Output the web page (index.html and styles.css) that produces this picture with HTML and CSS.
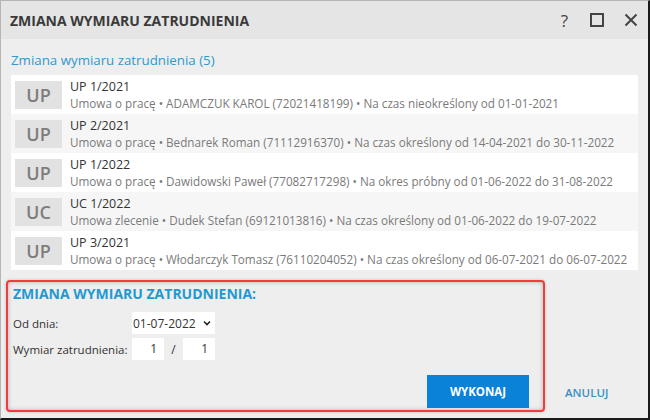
FILE: index.html
```html
<!DOCTYPE html>
<html lang="pl">
<head>
    <meta charset="UTF-8">
    <title>Zmiana wymiaru zatrudnienia</title>
    <link rel="stylesheet" href="styles.css">
</head>
<body>
    <div class="dialog">
        <div class="titlebar">
            <h1>ZMIANA WYMIARU ZATRUDNIENIA</h1>
            <div class="tools">
                <span class="help">?</span>
                <svg width="14" height="14" viewBox="0 0 14 14"><rect x="1" y="1" width="12" height="12" fill="none" stroke="#444" stroke-width="2"/></svg>
                <svg width="14" height="14" viewBox="0 0 14 14"><path d="M1.5 1.5 L12.5 12.5 M12.5 1.5 L1.5 12.5" stroke="#444" stroke-width="2"/></svg>
            </div>
        </div>

        <div class="content">
            <div class="list-title">Zmiana wymiaru zatrudnienia (5)</div>
            <div class="list">
                <div class="row">
                    <div class="badge">UP</div>
                    <div class="info">
                        <div class="name">UP 1/2021</div>
                        <div class="desc">Umowa o pracę • ADAMCZUK KAROL (72021418199) • Na czas nieokreślony od 01-01-2021</div>
                    </div>
                </div>
                <div class="row">
                    <div class="badge">UP</div>
                    <div class="info">
                        <div class="name">UP 2/2021</div>
                        <div class="desc">Umowa o pracę • Bednarek Roman (71112916370) • Na czas określony od 14-04-2021 do 30-11-2022</div>
                    </div>
                </div>
                <div class="row">
                    <div class="badge">UP</div>
                    <div class="info">
                        <div class="name">UP 1/2022</div>
                        <div class="desc">Umowa o pracę • Dawidowski Paweł (77082717298) • Na okres próbny od 01-06-2022 do 31-08-2022</div>
                    </div>
                </div>
                <div class="row">
                    <div class="badge">UC</div>
                    <div class="info">
                        <div class="name">UC 1/2022</div>
                        <div class="desc">Umowa zlecenie • Dudek Stefan (69121013816) • Na czas określony od 01-06-2022 do 19-07-2022</div>
                    </div>
                </div>
                <div class="row">
                    <div class="badge">UP</div>
                    <div class="info">
                        <div class="name">UP 3/2021</div>
                        <div class="desc">Umowa o pracę • Włodarczyk Tomasz (76110204052) • Na czas określony od 06-07-2021 do 06-07-2022</div>
                    </div>
                </div>
            </div>

            <div class="bottom">
                <div class="form-box">
                    <h2>ZMIANA WYMIARU ZATRUDNIENIA:</h2>
                    <div class="form-grid">
                        <label>Od dnia:</label>
                        <div class="select">01-07-2022
                            <svg width="8" height="6" viewBox="0 0 8 6"><path d="M1 1.5 L4 4.5 L7 1.5" fill="none" stroke="#222" stroke-width="1.6"/></svg>
                        </div>
                        <label>Wymiar zatrudnienia:</label>
                        <div class="fraction">
                            <span class="num">1</span>
                            <span class="slash">/</span>
                            <span class="num">1</span>
                        </div>
                    </div>
                    <button class="btn-primary">WYKONAJ</button>
                </div>
                <button class="btn-link">ANULUJ</button>
            </div>
        </div>
    </div>
</body>
</html>
```

FILE: styles.css
```css
html, body {
    margin: 0;
    padding: 0;
}
body {
    font-family: "Open Sans", "Noto Sans", sans-serif;
    color: #333;
}
.dialog {
    width: 650px;
    height: 420px;
    box-sizing: border-box;
    background: #eeeeee;
    border-top: 1px solid #b5b5b5;
    border-left: 1px solid #b5b5b5;
    border-right: 2px solid #1a1a1a;
    border-bottom: 2px solid #1a1a1a;
    display: flex;
    flex-direction: column;
}
.titlebar {
    height: 38px;
    background: #e5e5e5;
    display: flex;
    align-items: center;
    justify-content: space-between;
    padding: 0 10px 0 9px;
}
.titlebar h1 {
    margin: 0;
    font-size: 14px;
    font-weight: 700;
    color: #3a3a3a;
}
.tools {
    display: flex;
    align-items: center;
    gap: 20px;
}
.help {
    font-size: 17px;
    color: #444;
    margin-right: 2px;
}
.content {
    flex: 1;
    padding: 12px 9px 0 10px;
    display: flex;
    flex-direction: column;
}
.list-title {
    color: #2a9bd0;
    font-size: 13.3px;
    height: 24px;
}
.list {
    background: #fff;
    margin-right: 1px;
}
.row {
    height: 39px;
    display: flex;
    align-items: center;
    padding: 0 4px;
}
.row:nth-child(even) {
    background: #f6f6f6;
}
.badge {
    width: 47px;
    height: 28px;
    background: #e2e2e2;
    color: #7d7d7d;
    font-size: 18px;
    font-weight: 600;
    display: flex;
    align-items: center;
    justify-content: center;
    margin-right: 8px;
}
.name {
    font-size: 12.5px;
    color: #333;
    line-height: 17px;
}
.desc {
    font-size: 11.7px;
    color: #7a7a7a;
    line-height: 16px;
    white-space: nowrap;
}
.bottom {
    display: flex;
    align-items: flex-end;
    margin: 10px 0 0 -5px;
}
.form-box {
    width: 530px;
    height: 126px;
    border: 2px solid #f03c3c;
    border-radius: 4px;
    box-shadow: inset 0 0 4px rgba(0, 0, 0, 0.25), 0 0 3px rgba(0, 0, 0, 0.2);
    padding: 2px 0 0 5px;
    position: relative;
}
.form-box h2 {
    margin: 0;
    font-size: 14px;
    font-weight: 700;
    color: #1f9ad0;
    height: 28px;
}
.form-grid {
    display: grid;
    grid-template-columns: 119px auto;
    row-gap: 4px;
    align-items: center;
    font-size: 11.5px;
    color: #333;
    justify-content: start;
}
.form-grid label {
    white-space: nowrap;
}
.select {
    width: 83px;
    height: 22px;
    background: #fff;
    box-sizing: border-box;
    padding: 0 4px 0 1px;
    display: flex;
    align-items: center;
    justify-content: space-between;
    font-size: 12px;
}
.fraction {
    display: flex;
    align-items: center;
    font-size: 12px;
}
.num {
    width: 32px;
    height: 22px;
    background: #fff;
    box-sizing: border-box;
    text-align: right;
    padding-right: 7px;
    line-height: 22px;
}
.slash {
    width: 19px;
    text-align: center;
}
.btn-primary {
    position: absolute;
    right: 14px;
    bottom: 2px;
    width: 102px;
    height: 33px;
    border: none;
    background: #0a82d8;
    color: #fff;
    font-family: "Open Sans", sans-serif;
    font-weight: 700;
    font-size: 11.5px;
}
.btn-link {
    border: none;
    background: none;
    color: #3b8ec8;
    font-family: "Open Sans", sans-serif;
    font-size: 11.5px;
    font-weight: 600;
    margin: 0 0 12px 20px;
    padding: 0;
}
```
